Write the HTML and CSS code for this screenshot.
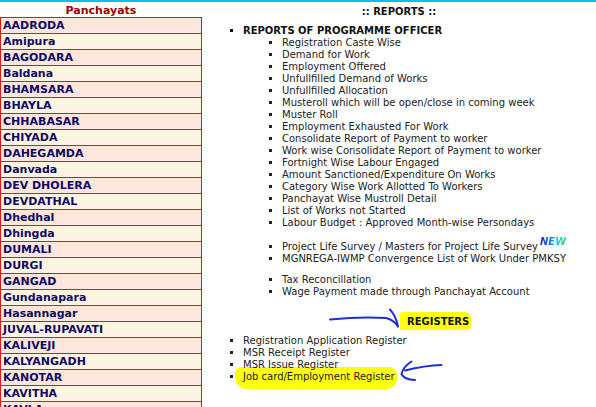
FILE: index.html
```html
<!DOCTYPE html>
<html lang="en">
<head>
<meta charset="utf-8">
<title>Reports</title>
<link rel="stylesheet" href="styles.css">
</head>
<body>
<div class="topbar"></div>
<div class="page">
  <div class="panchayats">
    <div class="p-head">Panchayats</div>
    <div class="p-row">AADRODA</div>
    <div class="p-row">Amipura</div>
    <div class="p-row">BAGODARA</div>
    <div class="p-row">Baldana</div>
    <div class="p-row">BHAMSARA</div>
    <div class="p-row">BHAYLA</div>
    <div class="p-row">CHHABASAR</div>
    <div class="p-row">CHIYADA</div>
    <div class="p-row">DAHEGAMDA</div>
    <div class="p-row">Danvada</div>
    <div class="p-row">DEV DHOLERA</div>
    <div class="p-row">DEVDATHAL</div>
    <div class="p-row">Dhedhal</div>
    <div class="p-row">Dhingda</div>
    <div class="p-row">DUMALI</div>
    <div class="p-row">DURGI</div>
    <div class="p-row">GANGAD</div>
    <div class="p-row">Gundanapara</div>
    <div class="p-row">Hasannagar</div>
    <div class="p-row">JUVAL-RUPAVATI</div>
    <div class="p-row">KALIVEJI</div>
    <div class="p-row">KALYANGADH</div>
    <div class="p-row">KANOTAR</div>
    <div class="p-row">KAVITHA</div>
    <div class="p-row">KAVLA</div>
  </div>
  <div class="reports">
    <div class="r-title">:: REPORTS ::</div>
    <ul class="main">
      <li class="group">REPORTS OF PROGRAMME OFFICER
        <ul class="sub">
          <li>Registration Caste Wise</li>
          <li>Demand for Work</li>
          <li>Employment Offered</li>
          <li>Unfullfilled Demand of Works</li>
          <li>Unfullfilled Allocation</li>
          <li>Musteroll which will be open/close in coming week</li>
          <li>Muster Roll</li>
          <li>Employment Exhausted For Work</li>
          <li>Consolidate Report of Payment to worker</li>
          <li>Work wise Consolidate Report of Payment to worker</li>
          <li>Fortnight Wise Labour Engaged</li>
          <li>Amount Sanctioned/Expenditure On Works</li>
          <li>Category Wise Work Allotted To Workers</li>
          <li>Panchayat Wise Mustroll Detail</li>
          <li>List of Works not Started</li>
          <li>Labour Budget : Approved Month-wise Persondays</li>
          <li class="gap12">Project Life Survey / Masters for Project Life Survey<span class="new">NEW</span></li>
          <li>MGNREGA-IWMP Convergence List of Work Under PMKSY</li>
          <li class="gap9">Tax Reconcillation</li>
          <li>Wage Payment made through Panchayat Account</li>
        </ul>
      </li>
    </ul>
    <div class="reg-head"><span class="hl">REGISTERS</span></div>
    <ul class="registers">
      <li>Registration Application Register</li>
      <li>MSR Receipt Register</li>
      <li>MSR Issue Register</li>
      <li><span class="marker">Job card/Employment Register</span></li>
    </ul>
    <svg class="arrows" viewBox="202 2 394 405" width="394" height="405" aria-hidden="true">
      <g fill="none" stroke="#1f2fd8" stroke-width="2" stroke-linecap="round" stroke-linejoin="round">
        <path d="M330 319.5 Q360 316.5 386 318 Q394 320 398 326.5"/>
        <path d="M390 309.5 Q396 316 398 326.5"/>
        <path d="M441.5 365 Q425 365.5 405 370.5"/>
        <path d="M411.5 361.5 Q403 367 401.5 374 Q404 379.5 415 380"/>
      </g>
    </svg>
  </div>
</div>
</body>
</html>
```
FILE: styles.css
```css
html, body {
  margin: 0;
  padding: 0;
  overflow: hidden;
  background: #ffffff;
}

body {
  font-family: "DejaVu Sans", Verdana, sans-serif;
}

.topbar {
  height: 2px;
  background: #0cbdf0;
}

.page {
  display: flex;
  align-items: flex-start;
}

.panchayats {
  width: 202px;
  flex: none;
  font-size: 11px;
  font-weight: bold;
}

.p-head {
  height: 13px;
  padding-top: 2px;
  line-height: 13px;
  text-align: center;
  color: #990000;
}

.p-row {
  height: 14px;
  padding: 1px 0 0 2px;
  line-height: 14px;
  border: 1px solid #e01818;
  border-bottom: none;
  color: #0b0b66;
  background: #fde6dd;
  white-space: nowrap;
}

.p-row:nth-child(odd) {
  background: #fef4e4;
}

.reports {
  flex: 1;
  position: relative;
  z-index: 0;
  font-size: 10px;
  line-height: 12px;
  color: #222222;
}

.r-title {
  padding-top: 4px;
  text-align: center;
  font-weight: bold;
  color: #111111;
}

.main {
  margin: 7px 0 0 0;
  padding-left: 41px;
  list-style: square;
}

.group {
  font-weight: bold;
  color: #111111;
}

.sub {
  margin: 0;
  padding-left: 39px;
  list-style: square;
  font-weight: normal;
  color: #222222;
}

.gap12 {
  margin-top: 12px;
}

.gap9 {
  margin-top: 9px;
}

.new {
  position: relative;
  top: -5px;
  margin-left: 2px;
  font-weight: bold;
  font-style: italic;
  background: linear-gradient(90deg, #2a1ee0 0%, #1a6cf0 35%, #10c8e8 65%, #22e070 100%);
  -webkit-background-clip: text;
  background-clip: text;
  color: transparent;
}

.reg-head {
  margin-top: 18px;
  padding-left: 198px;
  font-weight: bold;
  color: #111111;
}

.hl {
  padding: 4px 2px 3px 7px;
  background: #ffff10;
  border-radius: 3px 6px 4px 2px;
}

.registers {
  margin: 7px 0 0 0;
  padding-left: 41px;
  list-style: square;
}

.marker {
  position: relative;
}

.marker::before {
  content: "";
  position: absolute;
  left: -8px;
  right: -2px;
  top: -4px;
  bottom: -7px;
  background: #ffff10;
  border-radius: 6px 8px 10px 12px;
  z-index: -1;
}

.arrows {
  position: absolute;
  left: 0;
  top: 0;
  pointer-events: none;
}
```
